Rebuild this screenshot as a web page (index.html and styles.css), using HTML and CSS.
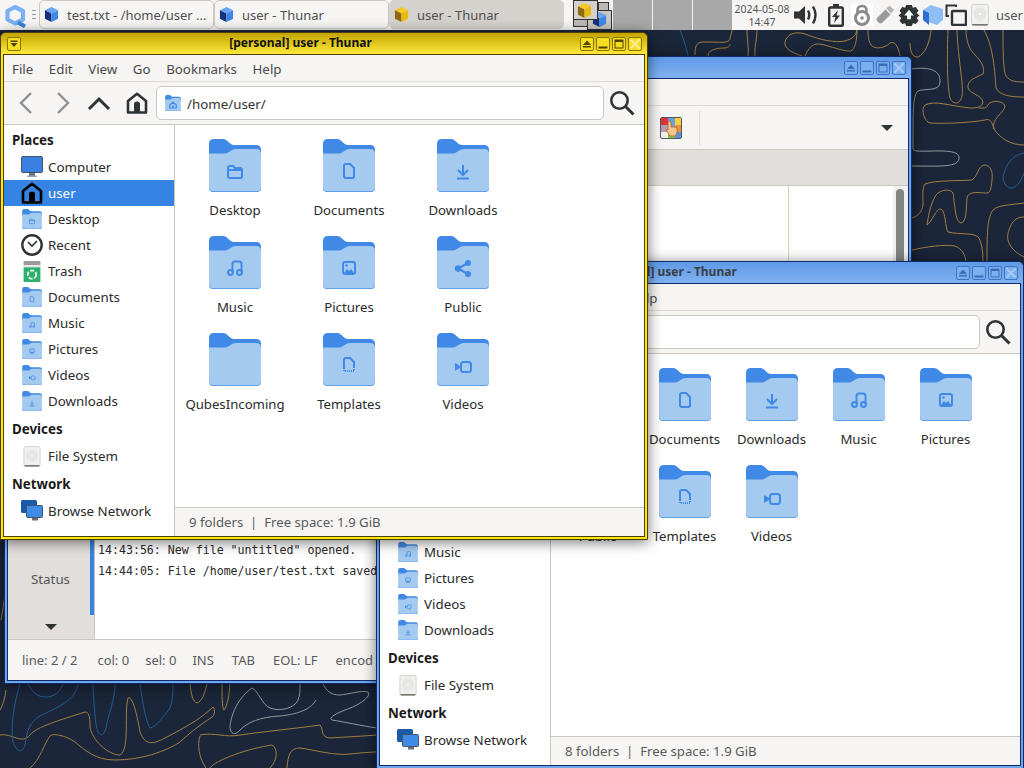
FILE: index.html
```html
<!DOCTYPE html>
<html lang="en">

<head>
    <meta charset="UTF-8">
    <meta name="viewport" content="width=device-width, initial-scale=1.0">
    <title>Qubes desktop</title>
    <link rel="stylesheet" href="styles.css">
</head>

<body>

    <!-- shared icons -->
    <svg class="defs" aria-hidden="true">
        <symbol id="folder" viewBox="0 0 52 53">
            <path fill="#4189e6" d="M0 5Q0 0 5 0H14C19 0 20 6 25 6H47Q52 6 52 11V20H0Z"/>
            <path fill="#4a8ee8" d="M0 47H52V49Q52 53 48 53H4Q0 53 0 49Z"/>
            <path fill="#a4caef" d="M0 14.500H16C20 14.500 22 10 27 10H47Q52 10 52 15V48Q52 52.300 48 52.300H4Q0 52.300 0 48Z"/>
        </symbol>
        <symbol id="em-desktop" viewBox="0 0 52 53">
            <path fill="none" stroke="#4189e6" stroke-width="2" d="M19 29Q19 27 21 27H24L26 29H31Q33 29 33 31V37Q33 39 31 39H21Q19 39 19 37Z M19 31H33"/>
        </symbol>
        <symbol id="em-file" viewBox="0 0 52 53">
            <path fill="none" stroke="#4189e6" stroke-width="2" d="M21 27Q21 25 23 25H27L31 29V37Q31 39 29 39H23Q21 39 21 37Z"/>
        </symbol>
        <symbol id="em-download" viewBox="0 0 52 53">
            <path fill="none" stroke="#4189e6" stroke-width="2" d="M26 26V36M21 31L26 36L31 31M20 39.500H32"/>
        </symbol>
        <symbol id="em-music" viewBox="0 0 52 53">
            <path fill="none" stroke="#4189e6" stroke-width="2" d="M23.500 36V28Q23.500 25.500 26 25.500H30Q32.500 25.500 32.500 28V36"/>
            <circle cx="21.500" cy="36.500" r="2.400" fill="none" stroke="#4189e6" stroke-width="2"/>
            <circle cx="30.500" cy="36.500" r="2.400" fill="none" stroke="#4189e6" stroke-width="2"/>
        </symbol>
        <symbol id="em-picture" viewBox="0 0 52 53">
            <rect x="20" y="26" width="12" height="12" rx="2" fill="none" stroke="#4189e6" stroke-width="2"/>
            <path fill="#4189e6" d="M21 37L24 33L26 35L28 33L31 37Z"/>
            <circle cx="23.500" cy="29.500" r="1.200" fill="#4189e6"/>
        </symbol>
        <symbol id="em-share" viewBox="0 0 52 53">
            <path fill="none" stroke="#4189e6" stroke-width="2" d="M31 27L21 32.500L31 38"/>
            <circle cx="31" cy="27" r="3" fill="#4189e6"/>
            <circle cx="21" cy="32.500" r="3.200" fill="#4189e6"/>
            <circle cx="31" cy="38" r="3" fill="#4189e6"/>
        </symbol>
        <symbol id="em-template" viewBox="0 0 52 53">
            <path fill="none" stroke="#4189e6" stroke-width="2" d="M21 35V27Q21 25 23 25H27L31 29V35"/>
            <path fill="none" stroke="#4189e6" stroke-width="2" stroke-dasharray="1 1" d="M21 35V38H31V35"/>
        </symbol>
        <symbol id="em-video" viewBox="0 0 52 53">
            <rect x="24" y="29" width="10" height="10" rx="2.500" fill="none" stroke="#4189e6" stroke-width="2"/>
            <path fill="#4189e6" d="M18 30L23 33V35L18 38Z"/>
        </symbol>
        <symbol id="em-home" viewBox="0 0 52 53">
            <path fill="none" stroke="#4189e6" stroke-width="4" d="M15 33L26 24L37 33V43H15Z"/>
            <path fill="#4189e6" d="M23 35H29V43H23Z"/>
        </symbol>
        <symbol id="cube-blue" viewBox="0 0 16 16">
            <path fill="#6aa5f0" d="M8 0L15 3.500L8 7L1 3.500Z"/>
            <path fill="#14307e" d="M1 3.500L8 7V16L1 12.500Z"/>
            <path fill="#3f87e6" d="M15 3.500L8 7V16L15 12.500Z"/>
        </symbol>
        <symbol id="cube-gold" viewBox="0 0 16 16">
            <path fill="#f6c924" d="M8 0L15 3.500L8 7L1 3.500Z"/>
            <path fill="#8d6a12" d="M1 3.500L8 7V16L1 12.500Z"/>
            <path fill="#eab80f" d="M15 3.500L8 7V16L15 12.500Z"/>
        </symbol>
        <symbol id="computer" viewBox="0 0 22 22">
            <rect x="0.500" y="0.500" width="21" height="16" rx="1.500" fill="#3b7fe0" stroke="#44546a"/>
            <path fill="#6b7078" d="M8 17H14V20H8Z"/>
            <path fill="#9aa0a6" d="M6 19.500H16V21H6Z"/>
        </symbol>
        <symbol id="home" viewBox="0 0 22 22">
            <path fill="none" stroke="currentColor" stroke-width="2.600" stroke-linejoin="round" d="M11 1.800L20 9V20.500H2V9Z"/>
            <path fill="currentColor" d="M8 12Q8 9.500 11 9.500Q14 9.500 14 12V20.500H8Z"/>
        </symbol>
        <symbol id="clock" viewBox="0 0 22 22">
            <circle cx="11" cy="11" r="9.700" fill="#fff" stroke="#2e3436" stroke-width="2.400"/>
            <path fill="none" stroke="#2e3436" stroke-width="1.600" d="M7 8L11 12L16 7"/>
        </symbol>
        <symbol id="trash" viewBox="0 0 18 20">
            <path fill="#9a9a98" d="M1 0H17V4H1Z"/>
            <path fill="#e8e8e6" d="M1 4H17V6H1Z"/>
            <path fill="#2fb16c" d="M1 6H17V20H1Z"/>
            <circle cx="9" cy="13" r="4" fill="none" stroke="#e4f7ec" stroke-width="1.800" stroke-dasharray="4 1.500"/>
        </symbol>
        <symbol id="disk" viewBox="0 0 18 22">
            <rect x="0.500" y="0.500" width="17" height="21" rx="2" fill="#f0f0ee" stroke="#d2d2cf"/>
            <path fill="#77776f" d="M1 20H17V20.500Q17 21.500 15.500 21.500H2.500Q1 21.500 1 20.500Z"/>
            <circle cx="9" cy="10" r="6.500" fill="#e6e6e4"/>
            <circle cx="9" cy="10" r="1" fill="#fff"/>
        </symbol>
        <symbol id="network" viewBox="0 0 22 22">
            <rect x="0" y="0" width="16" height="13" rx="1.500" fill="#1b5aa6"/>
            <rect x="5.500" y="5.500" width="16" height="12" rx="1" fill="#3f8ce8" stroke="#44546a"/>
            <path fill="#6b7078" d="M11 18H17V20.500H11Z"/>
        </symbol>
        <symbol id="search" viewBox="0 0 26 26">
            <circle cx="10.500" cy="10.500" r="8.200" fill="none" stroke="#2e3436" stroke-width="2.600"/>
            <path fill="none" stroke="#2e3436" stroke-width="3" d="M16.500 16.500L24.500 24.500"/>
        </symbol>
        <symbol id="btn-menu" viewBox="0 0 12 12">
            <path fill="currentColor" d="M2.500 2.500H9.500V4H2.500ZM2.500 5H9.500L6 9Z"/>
        </symbol>
        <symbol id="btn-shade" viewBox="0 0 12 12">
            <path fill="currentColor" d="M6 2.500L10 7H2ZM2 8H10V9.500H2Z"/>
        </symbol>
        <symbol id="btn-min" viewBox="0 0 12 12">
            <path fill="currentColor" d="M1.500 8.500H10.500V10.500H1.500Z"/>
        </symbol>
        <symbol id="btn-max" viewBox="0 0 12 12">
            <path fill="currentColor" d="M1.500 1.500H10.500V10.500H1.500ZM2.500 4V9.500H9.500V4Z" fill-rule="evenodd"/>
        </symbol>
        <symbol id="btn-close" viewBox="0 0 12 12">
            <path fill="none" stroke="currentColor" stroke-width="2" d="M1.500 1.500L10.500 10.500M10.500 1.500L1.500 10.500"/>
        </symbol>
    </svg>

    <!-- wallpaper -->
    <svg class="wallpaper" viewBox="0 0 1024 768" aria-hidden="true">
        <g fill="none" stroke="#a37e41" stroke-width="1">
            <path d="M695 55C695 44 697 42 705 42C720 42 730 44 730 38C731 34 732 32 732 30"/>
            <path d="M708 56C708 50 716 48 725 48C729 47 730 46 730 44"/>
            <path d="M747 30C747 40 749 48 748 56M757 30C757 40 754 48 755 56"/>
            <path d="M802 56C790 52 784 48 785 42C787 34 795 31 805 34C820 40 835 43 845 41C852 39 856 36 857 30"/>
            <path d="M805 56C808 49 812 43 820 44C830 46 845 52 851 51C855 49 857 40 857 30"/>
            <path d="M868 30C868 38 869 42 871 45C875 50 885 48 890 43C896 40 899 50 900 56"/>
            <path d="M910 43C910 50 912 58 918 57C925 54 930 42 931 30"/>
            <path d="M948 30C947 55 947 85 950 98C953 105 960 105 962 96C964 85 958 60 957 30"/>
            <path d="M966 30C966 42 970 50 975 55C982 62 985 68 983 74C975 78 967 80 968 88C970 94 982 95 983 102C982 108 975 108 970 108C950 106 935 100 925 105C920 110 925 122 930 123C950 124 975 122 985 120C990 118 992 122 994 129C1000 138 1010 145 1024 145"/>
            <path d="M994 129C990 120 1005 112 1005 106C1003 100 990 100 988 105C986 109 983 108 979 108"/>
            <path d="M984 30C995 50 995 80 996 88C1000 96 1012 97 1024 97"/>
            <path d="M1003 30C1003 50 1003 70 1006 76C1010 82 1018 82 1024 82"/>
            <path d="M912 218C918 216 922 212 923 205C923 195 922 188 925 184C935 180 960 181 972 180C978 176 978 166 984 165C991 165 993 172 992 180C991 190 990 194 985 193C975 192 968 192 967 198C966 208 967 222 961 223C955 222 955 205 953 193C950 188 940 190 936 195C930 205 928 218 927 225C932 222 936 208 941 209C946 212 945 228 948 232C960 235 975 232 979 238C982 245 983 252 983 262"/>
            <path d="M912 250C925 247 945 244 955 246C962 249 965 254 966 262"/>
            <path d="M1024 203C1010 205 998 205 993 210C987 218 987 235 987 262"/>
            <path d="M1024 217C1015 217 1012 222 1009 230C1005 240 1010 250 1024 257"/>
            <path d="M0 735C12 733 22 745 30 735C36 727 60 720 85 712C90 712 90 720 90 727C92 740 108 755 120 755C130 750 124 712 128 698C133 695 138 720 140 732C145 745 152 745 165 738C180 730 200 720 213 707C216 710 214 716 212 717C205 722 195 728 180 742C165 752 140 760 115 760C95 760 85 750 75 742C65 735 52 733 50 736C45 742 40 760 30 768"/>
            <path d="M190 683C191 695 193 702 197 703C201 702 205 695 207 683"/>
            <path d="M222 683C222 695 222 708 224 710C228 705 229 695 230 683"/>
            <path d="M200 736C197 745 199 758 206 768M200 735C215 732 225 738 240 735C260 732 300 728 320 725C324 730 320 737 330 738C345 737 365 736 377 735"/>
            <path d="M210 768C215 760 250 748 272 745C278 748 278 760 270 768"/>
            <path d="M287 768C288 755 290 748 300 748C315 750 335 756 350 754C360 753 370 752 377 752"/>
            <path d="M0 710C3 705 5 698 6 690"/>
            <path d="M1 620C3 610 4 600 5 595M0 460C3 450 4 430 5 420M0 200C3 180 4 160 5 140"/>
        </g>
        <g fill="none" stroke="#1f5f8f" stroke-width="1">
            <path d="M20 684C15 700 10 725 13 742C17 752 22 754 25 745C27 730 30 722 40 716C55 708 75 702 78 684"/>
            <path d="M28 684C32 692 38 697 45 697C55 697 60 692 63 684"/>
            <path d="M93 684C94 705 95 725 98 732C101 737 104 735 106 728C108 715 115 700 115 684"/>
            <path d="M140 684C142 700 146 722 150 728C155 728 165 715 170 708C173 700 173 690 173 684"/>
            <path d="M680 30C684 40 687 50 688 56"/>
            <path d="M1024 153C1012 155 1005 165 1003 178C1004 186 1010 190 1015 187C1020 183 1022 178 1024 173"/>
        </g>
        <g fill="none" stroke="#8e9aa0" stroke-width="1">
            <path d="M911 69C925 67 941 68 940 82C940 92 925 88 918 91C913 95 913 110 913 140C913 150 912 150 917 151C930 152 958 148 959 157C960 168 940 166 912 166"/>
            <path d="M230 728C230 720 235 700 252 688C258 690 262 705 270 708C280 712 295 708 298 700C300 695 300 690 300 684"/>
            <path d="M230 728C231 734 235 736 240 730C248 722 260 717 280 716C300 714 312 708 316 700"/>
            <path d="M323 684C326 690 330 695 340 695C350 694 362 690 368 692C372 696 360 705 345 710C335 714 328 718 332 720C345 722 362 726 377 728"/>
        </g>
    </svg>

    <!-- top panel -->
    <header class="panel">
        <svg class="qubes-logo" viewBox="0 0 22 24">
            <path fill="none" stroke="#7cb0f2" stroke-width="4.200" stroke-linejoin="round" d="M10 3L18 7V15.500L10 19.500L2.500 15.500V7Z"/>
            <path fill="none" stroke="#3f7fdb" stroke-width="4" d="M13 18.500L20 22.500"/>
        </svg>
        <div class="panel-handle"></div>
        <div class="task">
            <svg class="task-icon"><use href="#cube-blue"/></svg>
            <span class="task-label">test.txt - /home/user ...</span>
        </div>
        <div class="task">
            <svg class="task-icon"><use href="#cube-blue"/></svg>
            <span class="task-label">user - Thunar</span>
        </div>
        <div class="task task-active">
            <svg class="task-icon"><use href="#cube-gold"/></svg>
            <span class="task-label">user - Thunar</span>
        </div>
        <div class="pager">
            <div class="workspace">
                <svg viewBox="0 0 39 30" class="pager-map">
                    <rect x="25.500" y="2.500" width="10" height="9" fill="#bdb9b5" stroke="#333"/>
                    <rect x="0.500" y="19.500" width="15" height="7" fill="#bdb9b5" stroke="#333"/>
                    <rect x="14.500" y="10.500" width="24" height="19" fill="#c9c5c1" stroke="#333"/>
                    <use href="#cube-blue" x="19" y="12" width="15" height="15"/>
                    <rect x="0.500" y="0.500" width="24" height="19" fill="#d4d0cc" stroke="#333"/>
                    <use href="#cube-gold" x="4" y="3" width="15" height="15"/>
                </svg>
            </div>
            <div class="workspace"></div>
            <div class="workspace"></div>
            <div class="workspace"></div>
        </div>
        <div class="clock"><span>2024-05-08</span><span>14:47</span></div>
        <div class="tray">
            <svg class="tray-speaker" viewBox="0 0 24 20">
                <path fill="#333" d="M0 6.500H5L11 1V19L5 13.500H0Z"/>
                <path fill="none" stroke="#333" stroke-width="2.400" d="M14 5.500Q16.500 10 14 14.500M19 1.500Q24 10 19 18.500"/>
            </svg>
            <svg class="tray-battery" viewBox="0 0 18 23">
                <path fill="none" stroke="#2e3436" stroke-width="2.400" d="M2.200 5Q2.200 3.500 3.500 3.500H14.500Q15.800 3.500 15.800 5V20.500Q15.800 21.800 14.500 21.800H3.500Q2.200 21.800 2.200 20.500Z"/>
                <path fill="#2e3436" d="M6 0H12V3H6ZM11 6L5 13H8.500L7 19L13 11.500H9.500Z"/>
            </svg>
            <svg class="tray-lock" viewBox="0 0 22 22">
                <rect width="22" height="22" fill="#fff"/>
                <circle cx="11" cy="14" r="6.500" fill="none" stroke="#8b8b8b" stroke-width="3"/>
                <circle cx="11" cy="14" r="1.800" fill="#8b8b8b"/>
                <path fill="none" stroke="#8b8b8b" stroke-width="2.600" d="M6.500 8V6.500Q6.500 2 11 2Q15.500 2 15.500 6.500V8"/>
            </svg>
            <svg class="tray-usb" viewBox="0 0 18 20">
                <path fill="#9a9a9a" d="M1.500 12.500L9.500 4.500L14.500 9.500L6.500 17.500Q4.500 19.500 2.500 17.500L1.500 16.500Q-0.500 14.500 1.500 12.500Z"/>
                <path fill="#b4b4b4" d="M10.500 3.500L13.500 0.500L18 5L15 8.500Z"/>
            </svg>
            <svg class="tray-gear" viewBox="0 0 22 22">
                <path fill="#2e3436" d="M8 0H14L15 3L18 2L21 6L19 8.500L22 11L19 13.500L21 16.500L18 20L15 19L14 22H8L7 19L4 20L1 16.500L3 13.500L0 11L3 8.500L1 6L4 2L7 3Z"/>
                <path fill="#fff" d="M11 5L16 11H13V15H9V11H6Z"/>
            </svg>
            <svg class="tray-cube" viewBox="0 0 20 20">
                <path fill="#8fbdf6" d="M8 0L20 4V15L14 20L0 15V5Z"/>
                <path fill="#2f6ed0" d="M0 5L6 8V20L0 15Z"/>
            </svg>
            <svg class="tray-windows" viewBox="0 0 22 22">
                <path fill="none" stroke="#2e3436" stroke-width="2" d="M11 3V1.500H1.500V12H4"/>
                <rect x="7" y="7" width="14" height="14" rx="1" fill="none" stroke="#2e3436" stroke-width="2.400"/>
            </svg>
            <svg class="tray-disk"><use href="#disk"/></svg>
            <span class="tray-user">user</span>
        </div>
    </header>

    <!-- editor window, at the back -->
    <section class="win win-blue win-editor">
        <div class="titlebar">
            <button class="wbtn wbtn-left"><svg><use href="#btn-menu"/></svg></button>
            <span class="win-title covered">test.txt - /home/user - Mousepad</span>
            <div class="wbtns">
                <button class="wbtn"><svg><use href="#btn-shade"/></svg></button>
                <button class="wbtn"><svg><use href="#btn-min"/></svg></button>
                <button class="wbtn"><svg><use href="#btn-max"/></svg></button>
                <button class="wbtn wbtn-close"><svg><use href="#btn-close"/></svg></button>
            </div>
        </div>
        <div class="win-body">
            <div class="menubar"></div>
            <div class="edit-tools">
                <svg class="palette" viewBox="0 0 22 22">
                    <rect x="0.500" y="0.500" width="21" height="21" rx="1.500" fill="#eee" stroke="#555"/>
                    <rect x="1" y="1" width="7" height="7" fill="#d9343a"/>
                    <rect x="8" y="1" width="7" height="7" fill="#6aa0dc"/>
                    <rect x="15" y="1" width="6" height="7" fill="#f4d03a"/>
                    <rect x="1" y="8" width="7" height="7" fill="#b89ab8"/>
                    <rect x="8" y="8" width="7" height="7" fill="#6aa0dc"/>
                    <rect x="15" y="8" width="6" height="7" fill="#f0913a"/>
                    <rect x="8" y="15" width="7" height="6" fill="#8ac24a"/>
                    <rect x="15" y="15" width="6" height="6" fill="#5a92d8"/>
                    <path fill="#f3c68e" stroke="#b4661e" stroke-width="0.800" d="M8 5Q9.500 3.500 11 5V10Q15 9.500 17 11V15Q16.500 18 15 19H10L6 13Q7 12 8 13Z"/>
                </svg>
                <span class="tool-sep"></span>
                <span class="tool-arrow"></span>
            </div>
            <div class="tabstrip"></div>
            <div class="edit-main">
                <div class="edit-text"></div>
                <div class="edit-scroll"><div class="edit-thumb"></div></div>
            </div>
            <div class="log-pane">
                <div class="log-side">
                    <div class="log-tab">Status</div>
                    <div class="log-more"><span class="tool-arrow"></span></div>
                </div>
                <div class="log-text">
                    <p>14:43:56: New file "untitled" opened.</p>
                    <p>14:44:05: File /home/user/test.txt saved</p>
                </div>
            </div>
            <div class="edit-status">
                <span class="status-line">line: 2 / 2</span>
                <span>col: 0</span>
                <span>sel: 0</span>
                <span>INS</span>
                <span class="status-far">TAB</span>
                <span class="status-far">EOL: LF</span>
                <span class="status-far">encod</span>
            </div>
        </div>
    </section>

    <!-- second file manager, partly under the focused one -->
    <section class="win win-blue win-files-back">
        <div class="titlebar">
            <button class="wbtn wbtn-left"><svg><use href="#btn-menu"/></svg></button>
            <span class="win-title">[personal] user - Thunar</span>
            <div class="wbtns">
                <button class="wbtn"><svg><use href="#btn-shade"/></svg></button>
                <button class="wbtn"><svg><use href="#btn-min"/></svg></button>
                <button class="wbtn"><svg><use href="#btn-max"/></svg></button>
                <button class="wbtn wbtn-close"><svg><use href="#btn-close"/></svg></button>
            </div>
        </div>
        <div class="win-body">
            <nav class="menubar">
                <span class="covered">File</span><span class="covered">Edit</span><span class="covered">View</span><span class="covered">Go</span><span class="covered">Bookmarks</span><span>Help</span>
            </nav>
            <div class="toolbar">
                <div class="path-entry">
                    <span class="path-text covered">/home/user/</span>
                </div>
                <svg class="search-icon"><use href="#search"/></svg>
            </div>
            <div class="files-main">
                <aside class="sidebar">
                    <h3 class="covered">Places</h3>
                    <div class="side-item covered">Computer</div>
                    <div class="side-item covered">user</div>
                    <div class="side-item covered">Desktop</div>
                    <div class="side-item covered">Recent</div>
                    <div class="side-item covered">Trash</div>
                    <div class="side-item covered">Documents</div>
                    <div class="side-item"><svg class="side-icon side-folder"><use href="#folder"/><use href="#em-music"/></svg>Music</div>
                    <div class="side-item"><svg class="side-icon side-folder"><use href="#folder"/><use href="#em-picture"/></svg>Pictures</div>
                    <div class="side-item"><svg class="side-icon side-folder"><use href="#folder"/><use href="#em-video"/></svg>Videos</div>
                    <div class="side-item"><svg class="side-icon side-folder"><use href="#folder"/><use href="#em-download"/></svg>Downloads</div>
                    <h3>Devices</h3>
                    <div class="side-item"><svg class="side-icon side-disk"><use href="#disk"/></svg>File System</div>
                    <h3>Network</h3>
                    <div class="side-item"><svg class="side-icon"><use href="#network"/></svg>Browse Network</div>
                </aside>
                <div class="files-right">
                    <div class="file-grid file-grid-wide">
                        <div class="file covered"><svg class="file-icon"><use href="#folder"/></svg><span>Desktop</span></div>
                        <div class="file"><svg class="file-icon"><use href="#folder"/><use href="#em-file"/></svg><span>Documents</span></div>
                        <div class="file"><svg class="file-icon"><use href="#folder"/><use href="#em-download"/></svg><span>Downloads</span></div>
                        <div class="file"><svg class="file-icon"><use href="#folder"/><use href="#em-music"/></svg><span>Music</span></div>
                        <div class="file"><svg class="file-icon"><use href="#folder"/><use href="#em-picture"/></svg><span>Pictures</span></div>
                        <div class="file"><svg class="file-icon"><use href="#folder"/><use href="#em-share"/></svg><span>Public</span></div>
                        <div class="file"><svg class="file-icon"><use href="#folder"/><use href="#em-template"/></svg><span>Templates</span></div>
                        <div class="file"><svg class="file-icon"><use href="#folder"/><use href="#em-video"/></svg><span>Videos</span></div>
                    </div>
                    <div class="files-status">8 folders &nbsp;|&nbsp; Free space: 1.9 GiB</div>
                </div>
            </div>
        </div>
    </section>

    <!-- focused file manager -->
    <section class="win win-yellow win-files-front">
        <div class="titlebar">
            <button class="wbtn wbtn-left"><svg><use href="#btn-menu"/></svg></button>
            <span class="win-title">[personal] user - Thunar</span>
            <div class="wbtns">
                <button class="wbtn"><svg><use href="#btn-shade"/></svg></button>
                <button class="wbtn"><svg><use href="#btn-min"/></svg></button>
                <button class="wbtn"><svg><use href="#btn-max"/></svg></button>
                <button class="wbtn wbtn-close"><svg><use href="#btn-close"/></svg></button>
            </div>
        </div>
        <div class="win-body">
            <nav class="menubar">
                <span>File</span><span>Edit</span><span>View</span><span>Go</span><span>Bookmarks</span><span>Help</span>
            </nav>
            <div class="toolbar">
                <svg class="nav-icon" viewBox="0 0 24 24"><path fill="none" stroke="#8f9091" stroke-width="2.400" d="M16 2L6 12L16 22"/></svg>
                <svg class="nav-icon" viewBox="0 0 24 24"><path fill="none" stroke="#8f9091" stroke-width="2.400" d="M8 2L18 12L8 22"/></svg>
                <svg class="nav-icon" viewBox="0 0 24 24"><path fill="none" stroke="#2e3436" stroke-width="3" d="M2 18L12 8L22 18"/></svg>
                <svg class="nav-home"><use href="#home"/></svg>
                <div class="path-entry">
                    <svg class="path-icon"><use href="#folder"/><use href="#em-home"/></svg>
                    <span class="path-text">/home/user/</span>
                </div>
                <svg class="search-icon"><use href="#search"/></svg>
            </div>
            <div class="files-main">
                <aside class="sidebar">
                    <h3>Places</h3>
                    <div class="side-item"><svg class="side-icon"><use href="#computer"/></svg>Computer</div>
                    <div class="side-item side-item-on"><svg class="side-icon"><use href="#home"/></svg>user</div>
                    <div class="side-item"><svg class="side-icon side-folder"><use href="#folder"/><use href="#em-desktop"/></svg>Desktop</div>
                    <div class="side-item"><svg class="side-icon"><use href="#clock"/></svg>Recent</div>
                    <div class="side-item"><svg class="side-icon side-trash"><use href="#trash"/></svg>Trash</div>
                    <div class="side-item"><svg class="side-icon side-folder"><use href="#folder"/><use href="#em-file"/></svg>Documents</div>
                    <div class="side-item"><svg class="side-icon side-folder"><use href="#folder"/><use href="#em-music"/></svg>Music</div>
                    <div class="side-item"><svg class="side-icon side-folder"><use href="#folder"/><use href="#em-picture"/></svg>Pictures</div>
                    <div class="side-item"><svg class="side-icon side-folder"><use href="#folder"/><use href="#em-video"/></svg>Videos</div>
                    <div class="side-item"><svg class="side-icon side-folder"><use href="#folder"/><use href="#em-download"/></svg>Downloads</div>
                    <h3>Devices</h3>
                    <div class="side-item"><svg class="side-icon side-disk"><use href="#disk"/></svg>File System</div>
                    <h3>Network</h3>
                    <div class="side-item"><svg class="side-icon"><use href="#network"/></svg>Browse Network</div>
                </aside>
                <div class="files-right">
                    <div class="file-grid file-grid-narrow">
                        <div class="file"><svg class="file-icon"><use href="#folder"/><use href="#em-desktop"/></svg><span>Desktop</span></div>
                        <div class="file"><svg class="file-icon"><use href="#folder"/><use href="#em-file"/></svg><span>Documents</span></div>
                        <div class="file"><svg class="file-icon"><use href="#folder"/><use href="#em-download"/></svg><span>Downloads</span></div>
                        <div class="file"><svg class="file-icon"><use href="#folder"/><use href="#em-music"/></svg><span>Music</span></div>
                        <div class="file"><svg class="file-icon"><use href="#folder"/><use href="#em-picture"/></svg><span>Pictures</span></div>
                        <div class="file"><svg class="file-icon"><use href="#folder"/><use href="#em-share"/></svg><span>Public</span></div>
                        <div class="file"><svg class="file-icon"><use href="#folder"/></svg><span>QubesIncoming</span></div>
                        <div class="file"><svg class="file-icon"><use href="#folder"/><use href="#em-template"/></svg><span>Templates</span></div>
                        <div class="file"><svg class="file-icon"><use href="#folder"/><use href="#em-video"/></svg><span>Videos</span></div>
                    </div>
                    <div class="files-status">9 folders &nbsp;|&nbsp; Free space: 1.9 GiB</div>
                </div>
            </div>
        </div>
    </section>

</body>

</html>
```

FILE: styles.css
```css
html, body {
    margin: 0;
    padding: 0;
}

body {
    width: 1024px;
    height: 768px;
    overflow: hidden;
    position: relative;
    background-color: #1b263a;
    font-family: 'Noto Sans', sans-serif;
    font-size: 13.33px;
    color: #2a2a2a;
}

.defs {
    position: absolute;
    width: 0;
    height: 0;
}

.wallpaper {
    position: absolute;
    left: 0;
    top: 0;
    width: 1024px;
    height: 768px;
}

/* parts another window lies on */
.covered {
    visibility: hidden;
}

/* top panel */
.panel {
    position: absolute;
    left: 0;
    top: 0;
    width: 1024px;
    height: 30px;
    box-sizing: border-box;
    background-color: #f6f5f4;
    display: flex;
    align-items: flex-start;
}

.qubes-logo {
    width: 22px;
    height: 24px;
    margin: 4px 0 0 5px;
    flex: none;
}

.panel-handle {
    width: 4px;
    height: 10px;
    margin: 10px 3px 0 5px;
    flex: none;
    background: repeating-linear-gradient(#9a9a9a 0 1px, transparent 1px 4px);
}

.task {
    width: 175px;
    height: 29px;
    box-sizing: border-box;
    flex: none;
    padding-left: 4px;
    display: flex;
    align-items: center;
    gap: 8px;
    border: 1px solid #cdc7c2;
    border-radius: 5px;
    background-color: #f6f5f4;
    color: #4f5150;
    font-size: 13px;
}

.task-icon {
    width: 15px;
    height: 15px;
    flex: none;
}

.task-label {
    white-space: nowrap;
}

.task-active {
    background-color: #d5d1cd;
    border-color: #d5d1cd;
    margin-right: 9px;
}

.pager {
    width: 160px;
    height: 30px;
    flex: none;
    display: flex;
    gap: 1px;
    background-color: #f4f3f1;
}

.workspace {
    width: 39px;
    height: 30px;
    background-color: #a8a8a8;
}

.workspace:first-child {
    background-color: #f1f0ee;
}

.pager-map {
    display: block;
    width: 39px;
    height: 30px;
}

.clock {
    width: 58px;
    flex: none;
    display: flex;
    flex-direction: column;
    align-items: center;
    font-size: 10.5px;
    line-height: 13px;
    padding-top: 3px;
    color: #555;
}

.tray {
    display: flex;
    align-items: center;
    height: 30px;
}

.tray svg {
    flex: none;
}

.tray-speaker { width: 24px; height: 20px; margin-left: 3px; }
.tray-battery { width: 18px; height: 23px; margin-left: 9px; }
.tray-lock { width: 22px; height: 22px; margin-left: 6px; }
.tray-usb { width: 18px; height: 20px; margin-left: 3px; }
.tray-gear { width: 22px; height: 21px; margin-left: 4px; }
.tray-cube { width: 20px; height: 20px; margin-left: 3px; }
.tray-windows { width: 22px; height: 22px; margin-left: 2px; }
.tray-disk { width: 18px; height: 22px; margin-left: 4px; }

.tray-user {
    margin-left: 7px;
    color: #555;
    font-size: 13px;
}

/* window frames */
.win {
    position: absolute;
    box-sizing: border-box;
    display: flex;
    flex-direction: column;
    padding: 0 2px 2px;
    border: 1px solid;
    border-radius: 6px 6px 0 0;
    box-shadow: 0 2px 14px rgba(0, 0, 0, 0.55);
}

.win-yellow {
    border-color: #4f3e00;
    background-color: #ffe81a;
}

.win-blue {
    border-color: #0f2a6b;
    background-color: #6ea6ee;
}

.win-files-front {
    left: 0;
    top: 32px;
    width: 648px;
    height: 508px;
}

.win-files-back {
    left: 376px;
    top: 261px;
    width: 648px;
    height: 508px;
}

.win-editor {
    left: 4px;
    top: 56px;
    width: 908px;
    height: 628px;
}

.titlebar {
    height: 21px;
    flex: none;
    display: flex;
    align-items: center;
    margin: 0 -2px;
    padding: 0 5px 0 6px;
    border-radius: 5px 5px 0 0;
}

.win-yellow .titlebar {
    background: linear-gradient(#c2a400, #ffe93a);
    color: #111;
}

.win-blue .titlebar {
    background: linear-gradient(#5f9ae6, #80b2f3);
    color: #3a3f46;
}

.win-title {
    flex: 1;
    text-align: center;
    font-size: 12px;
    line-height: 18px;
    margin-bottom: 2px;
    font-weight: bold;
    white-space: nowrap;
}

.win-files-back .win-title {
    padding-right: 22px;
}

.wbtns {
    display: flex;
    gap: 2px;
}

.wbtn {
    width: 14px;
    height: 14px;
    padding: 0;
    border: 1px solid;
    border-radius: 2px;
    display: block;
    flex: none;
}

.wbtn svg {
    display: block;
    width: 12px;
    height: 12px;
}

.win-yellow .wbtn {
    border-color: #8d7400;
    color: #54430a;
    background-color: #f5dd20;
}

.win-yellow .wbtn-close {
    color: #f6ec9c;
}

.win-blue .wbtn {
    border-color: #3f74c4;
    color: #3b6cb8;
    background-color: #7bb0f0;
}

.win-blue .wbtn-close {
    color: #a9c9f5;
}

.win-body {
    flex: 1;
    min-height: 0;
    display: flex;
    flex-direction: column;
    border: 1px solid;
    background-color: #f6f5f4;
}

.win-yellow .win-body {
    border-color: #4f3e00;
}

.win-blue .win-body {
    border-color: #0f2a6b;
}

/* file manager */
.menubar {
    height: 27px;
    flex: none;
    box-sizing: border-box;
    padding: 2px 0 0 8px;
    display: flex;
    align-items: center;
    gap: 15.500px;
    border-bottom: 1px solid #dedbd8;
    color: #4a4a4a;
}

.toolbar {
    height: 43px;
    flex: none;
    box-sizing: border-box;
    display: flex;
    align-items: center;
    padding: 0 9px 0 11px;
    border-bottom: 1px solid #cdc7c2;
}

.nav-icon {
    width: 24px;
    height: 24px;
    margin-right: 11px;
    flex: none;
}

.nav-icon:nth-child(3) {
    margin-left: 2px;
    margin-right: 15px;
}

.nav-home {
    width: 22px;
    height: 24px;
    color: #2e3436;
    flex: none;
}

.path-entry {
    flex: 1;
    height: 34px;
    box-sizing: border-box;
    margin-left: 8px;
    padding-left: 8px;
    display: flex;
    align-items: center;
    gap: 6px;
    background-color: #fff;
    border: 1px solid #cdc7c2;
    border-radius: 5px;
}

.path-icon {
    width: 16px;
    height: 16px;
}

.path-text {
    color: #333;
    padding-top: 1px;
}

.search-icon {
    width: 26px;
    height: 26px;
    margin-left: 5px;
    flex: none;
}

.files-main {
    flex: 1;
    min-height: 0;
    display: flex;
}

.sidebar {
    width: 171px;
    flex: none;
    box-sizing: border-box;
    background-color: #fff;
    border-right: 1px solid #cdc7c2;
}

.sidebar h3 {
    margin: 0;
    height: 29px;
    padding-left: 8px;
    font-size: 13.33px;
    line-height: 31px;
    color: #1a1a1a;
}

.side-item {
    height: 26px;
    display: flex;
    align-items: center;
    gap: 5px;
    padding-left: 17px;
    color: #2a2a2a;
    white-space: nowrap;
}

.side-item-on {
    background-color: #3584e4;
    color: #fff;
}

.side-item-on .side-icon {
    color: #000;
}

.side-icon {
    width: 22px;
    height: 22px;
    flex: none;
}

.side-folder {
    width: 20px;
    height: 20px;
    margin: 0 1px;
}

.side-trash,
.side-disk {
    height: 21px;
}

.files-right {
    flex: 1;
    min-width: 0;
    display: flex;
    flex-direction: column;
    background-color: #fff;
}

.file-grid {
    flex: 1;
    min-height: 0;
    display: grid;
    grid-auto-rows: 97px;
    padding: 14px 0 0 3px;
    overflow: hidden;
}

.file-grid-narrow {
    grid-template-columns: repeat(3, 114px);
}

.file-grid-wide {
    grid-template-columns: repeat(5, 87px);
}

.file {
    display: flex;
    flex-direction: column;
    align-items: center;
    text-align: center;
    white-space: nowrap;
    font-size: 13.2px;
}

.file-icon {
    width: 52px;
    height: 53px;
    flex: none;
    margin-bottom: 9px;
}

.files-status {
    height: 29px;
    flex: none;
    box-sizing: border-box;
    padding-left: 14px;
    font-size: 13.2px;
    line-height: 28px;
    background-color: #f6f5f4;
    border-top: 1px solid #cdc7c2;
    color: #5a5a5a;
    white-space: nowrap;
}

/* editor window */
.edit-tools {
    height: 44px;
    flex: none;
    box-sizing: border-box;
    display: flex;
    align-items: center;
    justify-content: flex-end;
    padding-right: 15px;
    border-bottom: 1px solid #cdc7c2;
}

.palette {
    width: 22px;
    height: 22px;
}

.tool-sep {
    width: 1px;
    height: 34px;
    margin: 0 181px 0 17px;
    background-color: #dedbd8;
}

.tool-arrow {
    display: block;
    width: 0;
    height: 0;
    border-left: 6px solid transparent;
    border-right: 6px solid transparent;
    border-top: 6px solid #2e3436;
}

.tabstrip {
    height: 36px;
    flex: none;
    box-sizing: border-box;
    background-color: #e1dedb;
    border-bottom: 1px solid #cdc7c2;
}

.edit-main {
    flex: 1;
    min-height: 0;
    display: flex;
    background-color: #fff;
}

.edit-text {
    flex: 1;
}

.edit-text::after {
    content: "";
    display: block;
    width: 781px;
    height: 100%;
    box-sizing: border-box;
    border-right: 1px solid #bce5b4;
}

.edit-scroll {
    width: 15px;
    flex: none;
    background-color: #f1f0ee;
    padding: 3px 4px 0 3px;
    box-sizing: border-box;
}

.edit-thumb {
    height: 300px;
    border-radius: 4px;
    background-color: #838585;
}

.log-pane {
    height: 102px;
    flex: none;
    box-sizing: border-box;
    display: flex;
    background-color: #fff;
    border-bottom: 1px solid #cdc7c2;
}

.log-side {
    width: 86px;
    flex: none;
    display: flex;
    flex-direction: column;
    background-color: #e1dedb;
    border-right: 1px solid #cdc7c2;
}

.log-tab {
    height: 77px;
    box-sizing: border-box;
    padding: 5px 0 0 3px;
    border-right: 4px solid #3584e4;
    display: flex;
    align-items: center;
    justify-content: center;
    color: #555;
}

.log-more {
    flex: 1;
    display: flex;
    align-items: center;
    justify-content: center;
    padding-right: 1px;
}

.log-text {
    padding: 2px 0 0 3px;
    font-family: 'DejaVu Sans Mono', monospace;
    font-size: 11.6px;
    line-height: 21px;
    color: #2a2a2a;
    white-space: nowrap;
}

.log-text p {
    margin: 0;
}

.edit-status {
    height: 40px;
    flex: none;
    display: flex;
    align-items: center;
    gap: 16px;
    padding-left: 14px;
    font-size: 13px;
    color: #5a5a5a;
    white-space: nowrap;
}

.status-line {
    margin-right: 4px;
}

.status-far {
    margin-left: 2px;
}
```
